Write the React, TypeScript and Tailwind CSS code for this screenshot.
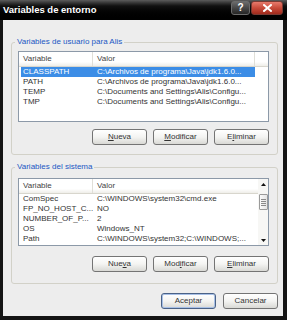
import React from 'react';

type Row = { name: string; value: string };

const userVars: Row[] = [
  { name: 'CLASSPATH', value: 'C:\\Archivos de programa\\Java\\jdk1.6.0...' },
  { name: 'PATH', value: 'C:\\Archivos de programa\\Java\\jdk1.6.0...' },
  { name: 'TEMP', value: 'C:\\Documents and Settings\\Alis\\Configu...' },
  { name: 'TMP', value: 'C:\\Documents and Settings\\Alis\\Configu...' },
];

const systemVars: Row[] = [
  { name: 'ComSpec', value: 'C:\\WINDOWS\\system32\\cmd.exe' },
  { name: 'FP_NO_HOST_C...', value: 'NO' },
  { name: 'NUMBER_OF_P...', value: '2' },
  { name: 'OS', value: 'Windows_NT' },
  { name: 'Path', value: 'C:\\WINDOWS\\system32;C:\\WINDOWS;...' },
];

interface BtnProps {
  pre?: string;
  hot?: string;
  post?: string;
  primary?: boolean;
}

const Btn: React.FC<BtnProps> = ({ pre = '', hot = '', post = '', primary = false }) => (
  <button
    className={`h-[16px] w-[55px] rounded-[3px] border bg-gradient-to-b from-white via-[#f4f4f2] to-[#d9d9d5] text-[8px] leading-none text-[#333] ${
      primary ? 'border-[#4a6287] shadow-[inset_0_0_0_1px_#a8c0e6]' : 'border-[#747474]'
    }`}
  >
    {pre}
    {hot && <span className="underline">{hot}</span>}
    {post}
  </button>
);

const Scrollbar = () => (
  <div className="w-[10px] flex flex-col items-center bg-[#f7f7f5]">
    <div className="h-[10px] flex items-center justify-center">
      <svg width="5" height="3" viewBox="0 0 5 3">
        <path d="M2.5 0 L5 3 L0 3 Z" fill="#111" />
      </svg>
    </div>
    <div className="mt-[5px] h-[16px] w-[9px] rounded-[1px] border border-[#9a9a9a] bg-gradient-to-r from-[#fbfbfb] to-[#e4e4e4] flex flex-col items-center justify-center gap-[1px]">
      <div className="h-px w-[5px] bg-[#8a8a8a]" />
      <div className="h-px w-[5px] bg-[#8a8a8a]" />
      <div className="h-px w-[5px] bg-[#8a8a8a]" />
      <div className="h-px w-[5px] bg-[#8a8a8a]" />
    </div>
    <div className="flex-1" />
    <div className="h-[10px] flex items-center justify-center">
      <svg width="5" height="3" viewBox="0 0 5 3">
        <path d="M0 0 L5 0 L2.5 3 Z" fill="#111" />
      </svg>
    </div>
  </div>
);

interface ListProps {
  rows: Row[];
  selected?: number;
  scroll?: boolean;
  height: string;
}

const ListView: React.FC<ListProps> = ({ rows, selected = -1, scroll = false, height }) => (
  <div className={`flex border border-[#8c99a8] bg-white ${height}`}>
    <div className="flex-1 min-w-0 flex flex-col">
      {/* Header */}
      <div className="flex h-[15px] shrink-0 border-b border-[#d8d6cd] bg-gradient-to-b from-white from-70% to-[#efeee9] text-[#444]">
        <div className="w-[74px] flex items-center pl-[4px] border-r border-[#e0dfd8]">Variable</div>
        <div className={`flex items-center pl-[4px] ${scroll ? 'flex-1' : 'w-[162px] border-r border-[#e0dfd8]'}`}>Valor</div>
        {!scroll && <div className="flex-1" />}
      </div>
      {rows.map((r, i) => (
        <div key={r.name} className="flex h-[10px] leading-[10px] pl-[2px]">
          <div
            className={`flex w-[234px] ${i === selected ? 'bg-[#3c8de6] text-white' : 'text-[#333]'}`}
          >
            <div className="w-[72px] pl-[2px] whitespace-nowrap overflow-hidden">{r.name}</div>
            <div className="flex-1 pl-[4px] whitespace-nowrap overflow-hidden">{r.value}</div>
          </div>
        </div>
      ))}
    </div>
    {scroll && <Scrollbar />}
  </div>
);

interface GroupProps {
  title: string;
  className?: string;
  children: React.ReactNode;
}

const Group: React.FC<GroupProps> = ({ title, className = '', children }) => (
  <div className={`relative rounded-[3px] border border-[#d2d1c8] pl-[6px] pr-[8px] ${className}`}>
    <span className="absolute -top-[6px] left-[3px] bg-[#ededed] px-[2px] leading-[10px] text-[#2158c4]">
      {title}
    </span>
    {children}
  </div>
);

export default function App() {
  return (
    <div className="w-[287px] h-[320px] flex flex-col bg-[#141414] font-['Liberation_Sans',Arial,sans-serif] text-[8px] text-black select-none">
      {/* Title bar */}
      <div className="h-[20px] shrink-0 flex items-start pl-[3px] pr-[4px] bg-gradient-to-b from-[#5c5c5c] via-[#111] via-30% to-[#000]">
        <span className="mt-[4px] text-[9.5px] leading-[12px] font-bold text-white [text-shadow:1px_1px_0_#000]">
          Variables de entorno
        </span>
        <div className="ml-auto mt-[1px] flex gap-[1px]">
          <div className="h-[14px] w-[19px] rounded-[3px] border border-[#6b6b6b] bg-gradient-to-b from-[#6a6a6a] to-[#262626] flex items-center justify-center text-[10px] font-bold leading-none text-white">
            ?
          </div>
          <div className="h-[14px] w-[32px] rounded-[3px] border border-[#7a3a33] bg-gradient-to-b from-[#e77a6c] via-[#c84a3a] to-[#a02a1c] flex items-center justify-center">
            <svg width="9" height="8" viewBox="0 0 9 8">
              <path d="M1 1 L8 7 M8 1 L1 7" stroke="#fff" strokeWidth="2" strokeLinecap="square" />
            </svg>
          </div>
        </div>
      </div>

      {/* Client area */}
      <div className="flex-1 ml-[3px] mr-[4px] mb-[4px] bg-[#ededed] pl-[8px] pr-[5px] pt-[22px] flex flex-col">
        <Group title="Variables de usuario para Alis" className="pt-[8px] pb-[9px]">
          <ListView rows={userVars} selected={0} height="h-[71px]" />
          <div className="mt-[7px] flex justify-end gap-[6px]">
            <Btn hot="N" post="ueva" />
            <Btn hot="M" post="odificar" />
            <Btn pre="E" hot="l" post="iminar" />
          </div>
        </Group>

        <Group title="Variables del sistema" className="mt-[12px] pt-[10px] pb-[11px]">
          <ListView rows={systemVars} scroll height="h-[68px]" />
          <div className="mt-[10px] flex justify-end gap-[6px]">
            <Btn pre="Nue" hot="v" post="a" />
            <Btn pre="Mod" hot="i" post="ficar" />
            <Btn hot="E" post="liminar" />
          </div>
        </Group>

        <div className="mt-[9px] flex justify-end gap-[7px]">
          <Btn pre="Aceptar" primary />
          <Btn pre="Cancelar" />
        </div>
      </div>
    </div>
  );
}
